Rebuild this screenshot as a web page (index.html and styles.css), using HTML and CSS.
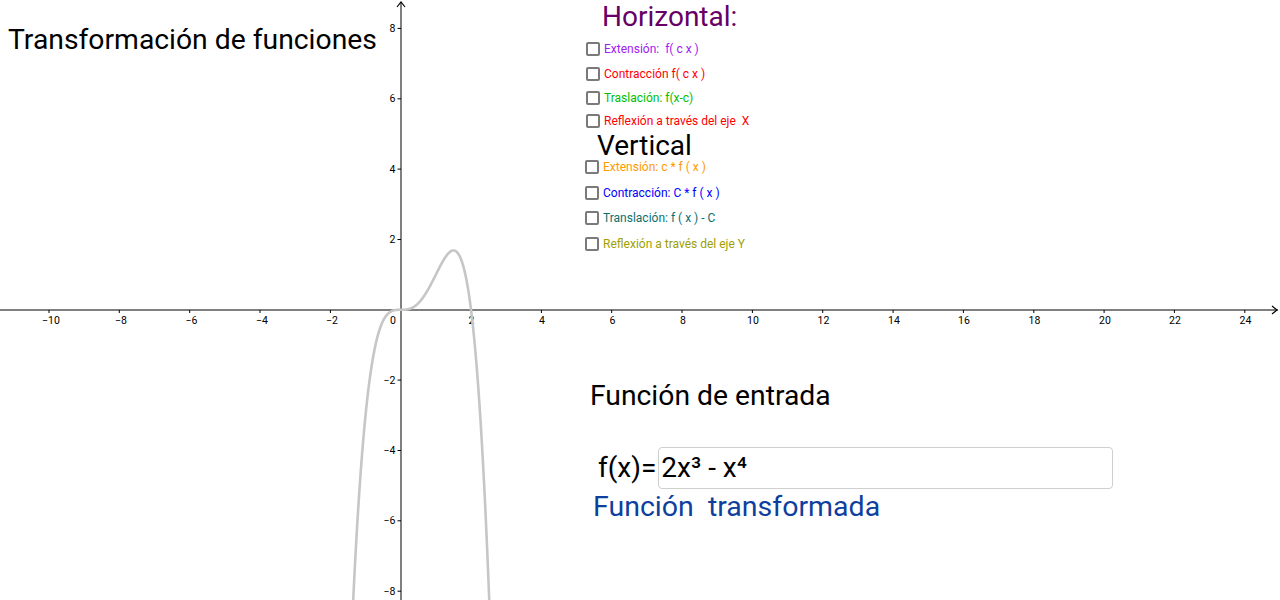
FILE: index.html
```html
<!DOCTYPE html>
<html lang="es">
<head>
<meta charset="utf-8">
<title>Transformación de funciones</title>
<link rel="stylesheet" href="styles.css">
</head>
<body>
<div class="stage">
  <svg class="graph" width="1280" height="600" viewBox="0 0 1280 600" xmlns="http://www.w3.org/2000/svg">
    <g class="axes">
      <line x1="0" y1="310" x2="1278" y2="310"/>
      <line x1="401" y1="2" x2="401" y2="600"/>
      <polyline class="arrow" points="1272,306 1277,310 1272,314"/>
      <polyline class="arrow" points="397,7 401,2 405,7"/>
      <g class="ticks">
        <line x1="49" y1="310" x2="49" y2="313"/>
        <line x1="119.3" y1="310" x2="119.3" y2="313"/>
        <line x1="189.7" y1="310" x2="189.7" y2="313"/>
        <line x1="260" y1="310" x2="260" y2="313"/>
        <line x1="330.4" y1="310" x2="330.4" y2="313"/>
        <line x1="471" y1="310" x2="471" y2="313"/>
        <line x1="541.4" y1="310" x2="541.4" y2="313"/>
        <line x1="611.7" y1="310" x2="611.7" y2="313"/>
        <line x1="682" y1="310" x2="682" y2="313"/>
        <line x1="752.4" y1="310" x2="752.4" y2="313"/>
        <line x1="822.7" y1="310" x2="822.7" y2="313"/>
        <line x1="893.1" y1="310" x2="893.1" y2="313"/>
        <line x1="963.4" y1="310" x2="963.4" y2="313"/>
        <line x1="1033.8" y1="310" x2="1033.8" y2="313"/>
        <line x1="1104.1" y1="310" x2="1104.1" y2="313"/>
        <line x1="1174.4" y1="310" x2="1174.4" y2="313"/>
        <line x1="1244.8" y1="310" x2="1244.8" y2="313"/>
        <line x1="397.5" y1="28.4" x2="401" y2="28.4"/>
        <line x1="397.5" y1="98.8" x2="401" y2="98.8"/>
        <line x1="397.5" y1="169.1" x2="401" y2="169.1"/>
        <line x1="397.5" y1="239.5" x2="401" y2="239.5"/>
        <line x1="397.5" y1="380.1" x2="401" y2="380.1"/>
        <line x1="397.5" y1="450.5" x2="401" y2="450.5"/>
        <line x1="397.5" y1="520.8" x2="401" y2="520.8"/>
        <line x1="397.5" y1="591.2" x2="401" y2="591.2"/>
      </g>
      <g class="xlabels">
        <text x="51" y="324">−10</text>
        <text x="121" y="324">−8</text>
        <text x="191.5" y="324">−6</text>
        <text x="262" y="324">−4</text>
        <text x="332" y="324">−2</text>
        <text x="471.5" y="324">2</text>
        <text x="542" y="324">4</text>
        <text x="612.5" y="324">6</text>
        <text x="683" y="324">8</text>
        <text x="753" y="324">10</text>
        <text x="823.5" y="324">12</text>
        <text x="894" y="324">14</text>
        <text x="964" y="324">16</text>
        <text x="1034.5" y="324">18</text>
        <text x="1105" y="324">20</text>
        <text x="1175" y="324">22</text>
        <text x="1245.5" y="324">24</text>
        <text x="393" y="324">0</text>
      </g>
      <g class="ylabels">
        <text x="395.5" y="32">8</text>
        <text x="395.5" y="102.3">6</text>
        <text x="395.5" y="172.6">4</text>
        <text x="395.5" y="243">2</text>
        <text x="395.5" y="383.6">−2</text>
        <text x="395.5" y="454">−4</text>
        <text x="395.5" y="524.3">−6</text>
        <text x="395.5" y="594.7">−8</text>
      </g>
    </g>
    <path id="curve" class="curve" d=""/>
  </svg>

  <h1 class="title">Transformación de funciones</h1>

  <div class="panel">
    <div class="group">
      <h2 class="heading heading-h">Horizontal:</h2>
      <ul class="options">
        <li class="opt c-purple"><span class="box"></span><span class="lbl">Extensión:  f( c x )</span></li>
        <li class="opt c-red"><span class="box"></span><span class="lbl">Contracción f( c x )</span></li>
        <li class="opt c-green"><span class="box"></span><span class="lbl">Traslación: f(x-c)</span></li>
        <li class="opt c-red lift"><span class="box"></span><span class="lbl">Reflexión a través del eje  X</span></li>
      </ul>
    </div>
    <div class="group">
      <h2 class="heading heading-v">Vertical</h2>
      <ul class="options options-v">
        <li class="opt c-orange"><span class="box"></span><span class="lbl">Extensión: c * f ( x )</span></li>
        <li class="opt c-blue"><span class="box"></span><span class="lbl">Contracción: C * f ( x )</span></li>
        <li class="opt c-teal"><span class="box"></span><span class="lbl">Translación: f ( x ) - C</span></li>
        <li class="opt c-olive"><span class="box"></span><span class="lbl">Reflexión a través del eje Y</span></li>
      </ul>
    </div>
  </div>

  <div class="inputarea">
    <h2 class="subhead">Función de entrada</h2>
    <div class="inputrow">
      <label class="flabel" for="fx">f(x)=</label>
      <div class="field" id="fx">2x³ - x⁴</div>
    </div>
    <div class="transformed">Función  transformada</div>
  </div>
</div>
<script src="script.js"></script>
</body>
</html>
```
FILE: styles.css
```css
html, body {
  margin: 0;
  padding: 0;
  background: #ffffff;
}
body {
  font-family: Roboto, "Liberation Sans", Arial, sans-serif;
  color: #000;
}
.stage {
  position: relative;
  width: 1280px;
  height: 600px;
  overflow: hidden;
  background: #fff;
}
.graph {
  position: absolute;
  left: 0;
  top: 0;
  display: block;
}
.axes line,
.axes polyline {
  stroke: #000;
  stroke-width: 1;
  fill: none;
}
.axes .arrow {
  stroke-width: 1.2;
}
.xlabels text,
.ylabels text {
  font-family: Roboto, "Liberation Sans", sans-serif;
  font-size: 10.5px;
  fill: #000;
}
.xlabels text { text-anchor: middle; }
.ylabels text { text-anchor: end; }
.curve {
  fill: none;
  stroke: #c6c6c6;
  stroke-width: 2.6;
  stroke-linejoin: round;
  stroke-linecap: round;
}
.title {
  position: absolute;
  left: 8px;
  top: 26px;
  margin: 0;
  font-weight: 400;
  font-size: 28.3px;
  line-height: 28px;
  white-space: nowrap;
}
.panel {
  position: absolute;
  left: 586px;
  top: 0;
  display: flex;
  flex-direction: column;
}
.heading {
  margin: 0;
  font-weight: 400;
  font-size: 28px;
  white-space: nowrap;
}
.heading-h {
  color: #660066;
  margin-left: 16px;
  line-height: 33px;
  height: 33px;
}
.heading-v {
  color: #000;
  margin-left: 11px;
  margin-top: -1.4px;
  line-height: 29px;
  height: 29px;
}
.options {
  list-style: none;
  margin: 0;
  padding: 4px 0 0 0;
  display: flex;
  flex-direction: column;
}
.options-v {
  padding-top: 0;
  margin-top: -6.3px;
}
.opt {
  display: flex;
  align-items: center;
  gap: 4px;
  height: 24.6px;
  font-size: 12px;
  white-space: pre;
}
.options-v .opt {
  height: 25.7px;
  margin-left: -1px;
}
.opt.lift {
  margin-top: -2.5px;
}
.box {
  box-sizing: border-box;
  width: 14px;
  height: 14px;
  border: 2px solid #7a7a7a;
  border-radius: 2px;
  background: #fff;
  flex: none;
}
.lbl {
  line-height: 14px;
}
.c-purple { color: #a020f0; }
.c-red { color: #ff0000; }
.c-green { color: #00c000; }
.c-orange { color: #ff9a00; }
.c-blue { color: #0000ff; }
.c-teal { color: #0a7070; }
.c-olive { color: #a0a000; }

.inputarea {
  position: absolute;
  left: 590px;
  top: 381px;
  display: flex;
  flex-direction: column;
}
.subhead {
  margin: 0;
  font-weight: 400;
  font-size: 28.3px;
  line-height: 30px;
  white-space: nowrap;
}
.inputrow {
  display: flex;
  align-items: center;
  margin-top: 36px;
  margin-left: 8px;
}
.flabel {
  font-size: 28px;
  line-height: 30px;
  padding-right: 2px;
}
.field {
  box-sizing: border-box;
  width: 455px;
  height: 42px;
  border: 1px solid #cfcfcf;
  border-radius: 4px;
  padding: 3px 0 0 2px;
  font-size: 28px;
  line-height: 34px;
  white-space: pre;
}
.transformed {
  margin-top: 2px;
  margin-left: 3px;
  font-size: 28.5px;
  line-height: 32px;
  color: #0f3f9e;
  white-space: pre;
}
```
FILE: script.js
```js
(function () {
  var ox = 400.7, oy = 309.8, s = 35.17;
  var d = [];
  for (var i = 0; i <= 420; i++) {
    var x = -1.5 + i * 0.01;
    var y = 2 * x * x * x - x * x * x * x;
    var px = ox + x * s;
    var py = oy - y * s;
    d.push((i === 0 ? "M" : "L") + px.toFixed(2) + " " + py.toFixed(2));
  }
  document.getElementById("curve").setAttribute("d", d.join(" "));
})();
```
